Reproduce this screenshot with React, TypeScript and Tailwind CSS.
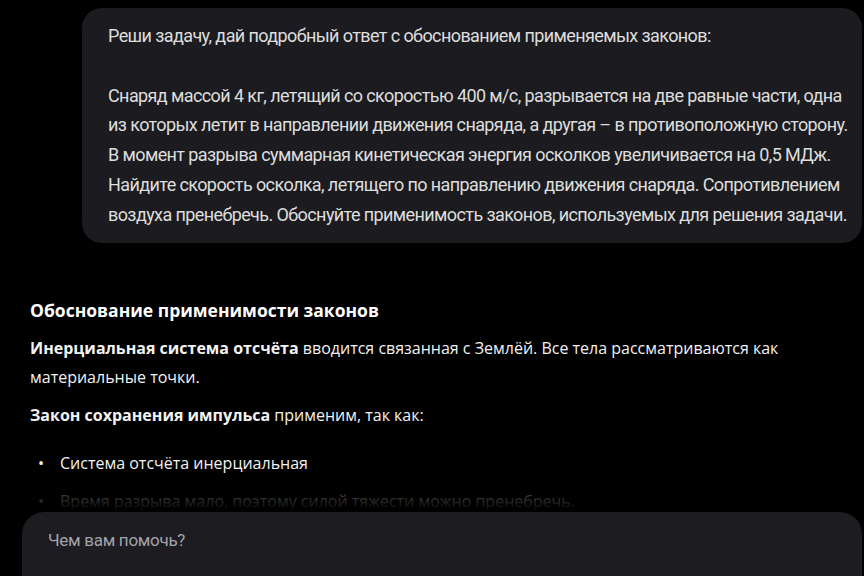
export default function App() {
  return (
    <div className="relative h-[576px] w-[864px] overflow-hidden bg-black" style={{ fontFamily: '"Open Sans", "Noto Sans", sans-serif' }}>
      {/* сообщение пользователя */}
      <div className="ml-[82px] mt-[8px] w-[780px] whitespace-nowrap rounded-[20px] bg-[#1c1c20] pl-[26px] pr-[10px] pt-[13px] pb-[14px] font-['Roboto',sans-serif] text-[18px] leading-[29.75px] tracking-[-0.6px] text-[#dedede]">
        <p>Реши задачу, дай подробный ответ с обоснованием применяемых законов:</p>
        <p className="h-[29.75px]" />
        <p>
          Снаряд массой 4 кг, летящий со скоростью 400 м/с, разрывается на две равные части, одна
          <br />
          из которых летит в направлении движения снаряда, а другая – в противоположную сторону.
          <br />
          В момент разрыва суммарная кинетическая энергия осколков увеличивается на 0,5 МДж.
          <br />
          Найдите скорость осколка, летящего по направлению движения снаряда. Сопротивлением
          <br />
          воздуха пренебречь. Обоснуйте применимость законов, используемых для решения задачи.
        </p>
      </div>

      {/* ответ */}
      <div className="pl-[30px] pr-[60px] text-[16px] leading-[29px] text-[#f2f2f2]">
        <h3 className="mt-[55px] text-[17.5px] leading-[24px] font-bold text-white">Обоснование применимости законов</h3>
        <p className="mt-[12px]">
          <b>Инерциальная система отсчёта</b> вводится связанная с Землёй. Все тела рассматриваются как
          <br />
          материальные точки.
        </p>
        <p className="mt-[9px]">
          <b>Закон сохранения импульса</b> применим, так как:
        </p>
        <ul className="mt-[19px] space-y-[9px]">
          <li className="flex gap-[16px] pl-[8px]">
            <span>•</span>
            <span>Система отсчёта инерциальная</span>
          </li>
          <li className="flex gap-[16px] pl-[8px]">
            <span>•</span>
            <span>Время разрыва мало, поэтому силой тяжести можно пренебречь.</span>
          </li>
        </ul>
      </div>

      {/* поле ввода */}
      <div className="absolute inset-x-0 bottom-0 h-[92px]">
        <div className="h-[28px] bg-gradient-to-b from-black/60 to-black" />
        <div className="ml-[22px] mr-[2px] h-[64px] rounded-t-[22px] bg-[#1c1c21] px-[26px] pt-[16px] text-[17px] font-['Roboto',sans-serif] tracking-[-0.3px] text-[#a3a3ab]">
          Чем вам помочь?
        </div>
      </div>
    </div>
  )
}
